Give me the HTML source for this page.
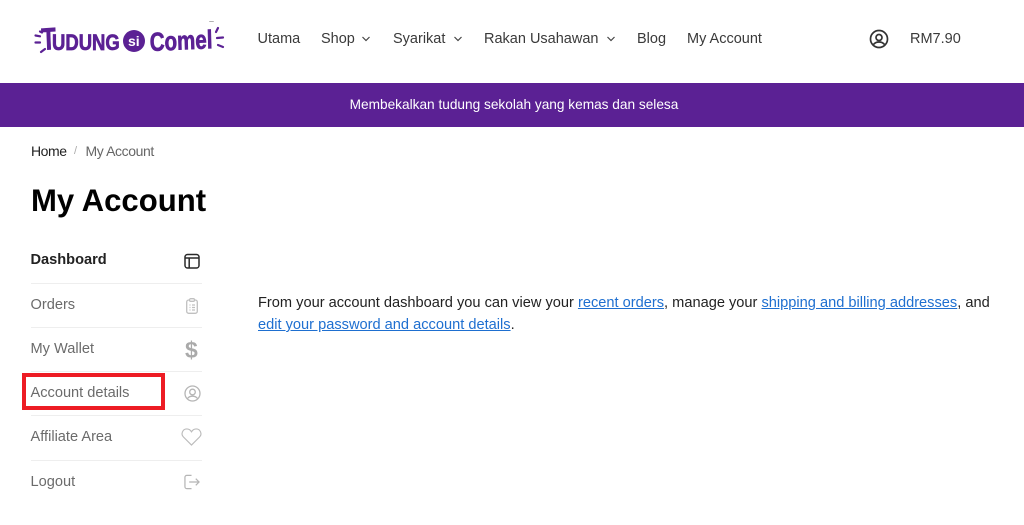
<!DOCTYPE html>
<html lang="en">
<head>
<meta charset="utf-8">
<title>My Account</title>
<style>
html,body{margin:0;padding:0;background:#fff}
body{position:relative;width:1024px;height:525px;overflow:hidden;font-family:"Liberation Sans",sans-serif;color:#333}
.a{position:absolute;white-space:nowrap;line-height:20px}
.nav{font-size:14.5px;color:#3a3a3a;top:29px}
.side{font-size:14.6px;color:#6b6b6b;left:30.5px}
.ln{position:absolute;left:31px;width:171px;height:1px;background:#eee}
.logo{font-weight:bold;color:#5b2194;transform-origin:left bottom;-webkit-text-stroke:.7px #5b2194}
a{color:#1e6fd0;text-decoration:underline}
svg{position:absolute;overflow:visible}
</style>
</head>
<body>
<!-- logo -->
<svg style="left:0;top:0" width="240" height="70" viewBox="0 0 240 70" fill="none" stroke="#5b2194" stroke-width="2.200" stroke-linecap="round">
<path d="M40 31.500l2 1M35.500 35.500l4.500 .8M35.500 42.500h4.500M41 52l4-3"/>
<path d="M218 28l-2 4M217 38l6-.5M218 45l5 2"/>
<circle cx="134" cy="41" r="11" fill="#5b2194" stroke="none"/>
<path d="M209.500 21.500h4" stroke-width=".8" stroke="#999"/>
</svg>
<div class="a logo" style="left:42px;top:27px;font-size:31px;line-height:26px;transform:scaleX(.76) rotate(-3deg)">T</div>
<div class="a logo" style="left:52px;top:33px;font-size:22px;line-height:20px;transform:scaleX(.84)">UDUNG</div>
<div class="a" style="left:128px;top:31px;font-size:14px;font-weight:bold;color:#fff;line-height:20px">si</div>
<div class="a logo" style="left:150px;top:31px;font-size:26px;line-height:22px;transform:scaleX(.79) rotate(-2deg)">Comel</div>

<!-- nav -->
<div class="a nav" style="left:257.500px">Utama</div>
<div class="a nav" style="left:321px">Shop</div>
<svg style="left:361px;top:36px" width="10" height="6" fill="none" stroke="#444" stroke-width="1.200"><path d="M1.500 1l3.500 3.500L8.500 1"/></svg>
<div class="a nav" style="left:393px">Syarikat</div>
<svg style="left:452.500px;top:36px" width="10" height="6" fill="none" stroke="#444" stroke-width="1.200"><path d="M1.500 1l3.500 3.500L8.500 1"/></svg>
<div class="a nav" style="left:484px">Rakan Usahawan</div>
<svg style="left:605.500px;top:36px" width="10" height="6" fill="none" stroke="#444" stroke-width="1.200"><path d="M1.500 1l3.500 3.500L8.500 1"/></svg>
<div class="a nav" style="left:637px">Blog</div>
<div class="a nav" style="left:687px">My Account</div>
<svg style="left:869px;top:29px" width="20" height="20" viewBox="0 0 20 20" fill="none" stroke="#333" stroke-width="1.700"><circle cx="10" cy="10" r="8.500"/><circle cx="10" cy="8.500" r="3"/><path d="M4.500 15.500c1.500-2 3.500-2.500 5.500-2.500s4 .5 5.500 2.500"/></svg>
<div class="a nav" style="left:910px">RM7.90</div>

<!-- banner -->
<div style="position:absolute;left:0;top:83px;width:1024px;height:44px;background:#5b2194"></div>
<div class="a" style="left:0;width:1028px;text-align:center;top:94.500px;font-size:13.670px;color:#fff">Membekalkan tudung sekolah yang kemas dan selesa</div>

<!-- breadcrumb -->
<div class="a" style="left:31px;top:141px;font-size:14px;color:#222;letter-spacing:-.45px">Home</div>
<div class="a" style="left:74px;top:141px;font-size:11px;color:#aaa">/</div>
<div class="a" style="left:85.500px;top:141px;font-size:14px;color:#666;letter-spacing:-.4px">My Account</div>

<div class="a" style="left:31px;top:182px;font-size:31.100px;line-height:38px;font-weight:bold;color:#000">My Account</div>

<!-- sidebar -->
<div class="a side" style="top:250px;font-weight:bold;color:#222">Dashboard</div>
<svg style="left:184px;top:253px" width="16" height="16" viewBox="0 0 16 16" fill="none" stroke="#2a2a2a" stroke-width="1.500"><rect x="1" y="1.500" width="14" height="13.500" rx="2.500"/><path d="M1 5h14M5.200 5V15"/></svg>
<div class="ln" style="top:283px"></div>

<div class="a side" style="top:295px">Orders</div>
<svg style="left:186px;top:298px" width="12" height="16" viewBox="0 0 12 16" fill="none" stroke="#c0c0c0" stroke-width="1.300"><rect x=".700" y="2" width="10.600" height="13.300" rx="2"/><rect x="3.500" y=".700" width="5" height="2.600" rx="1.200" fill="#fff"/><path d="M3.500 7h1M6 7h3M3.500 9.500h1M6 9.500h3M3.500 12h1M6 12h3"/></svg>
<div class="ln" style="top:327px"></div>

<div class="a side" style="top:339px">My Wallet</div>
<div class="a" style="left:185px;top:336.500px;font-size:23px;line-height:26px;color:#aaa;font-weight:bold">$</div>
<div class="ln" style="top:371px"></div>

<div class="a side" style="top:383px">Account details</div>
<svg style="left:184px;top:385px" width="17" height="17" viewBox="0 0 17 17" fill="none" stroke="#b5b5b5" stroke-width="1.300"><circle cx="8.500" cy="8.500" r="7.500"/><circle cx="8.500" cy="7" r="2.800"/><path d="M3.500 13.500c1.300-1.800 3-2.300 5-2.300s3.700.5 5 2.300"/></svg>
<div class="ln" style="top:415px"></div>
<div style="position:absolute;left:22px;top:373px;width:134.500px;height:28.500px;border:4.300px solid #ed1c24"></div>

<div class="a side" style="top:427px">Affiliate Area</div>
<svg style="left:181px;top:428px" width="21" height="18" viewBox="0 0 22 19" fill="none" stroke="#bbb" stroke-width="1.200"><path d="M11 18L2.500 9.500C-.5 6.500 1.500 1 6 1c2.200 0 3.800 1 5 3 1.200-2 2.800-3 5-3 4.500 0 6.500 5.500 3.500 8.500z"/></svg>
<div class="ln" style="top:460px"></div>

<div class="a side" style="top:472px">Logout</div>
<svg style="left:184px;top:474px" width="16" height="16" viewBox="0 0 17 16" fill="none" stroke="#b5b5b5" stroke-width="1.300"><path d="M8 1H3a2 2 0 0 0-2 2v10a2 2 0 0 0 2 2h5M5.500 8H16M12.500 4.500L16 8l-3.500 3.500"/></svg>

<!-- content -->
<div class="a" style="left:258px;top:292px;font-size:14.620px;line-height:22px;color:#222;white-space:normal;width:745px">From your account dashboard you can view your <a>recent orders</a>, manage your <a>shipping and billing addresses</a>, and<br><a>edit your password and account details</a>.</div>
</body>
</html>
